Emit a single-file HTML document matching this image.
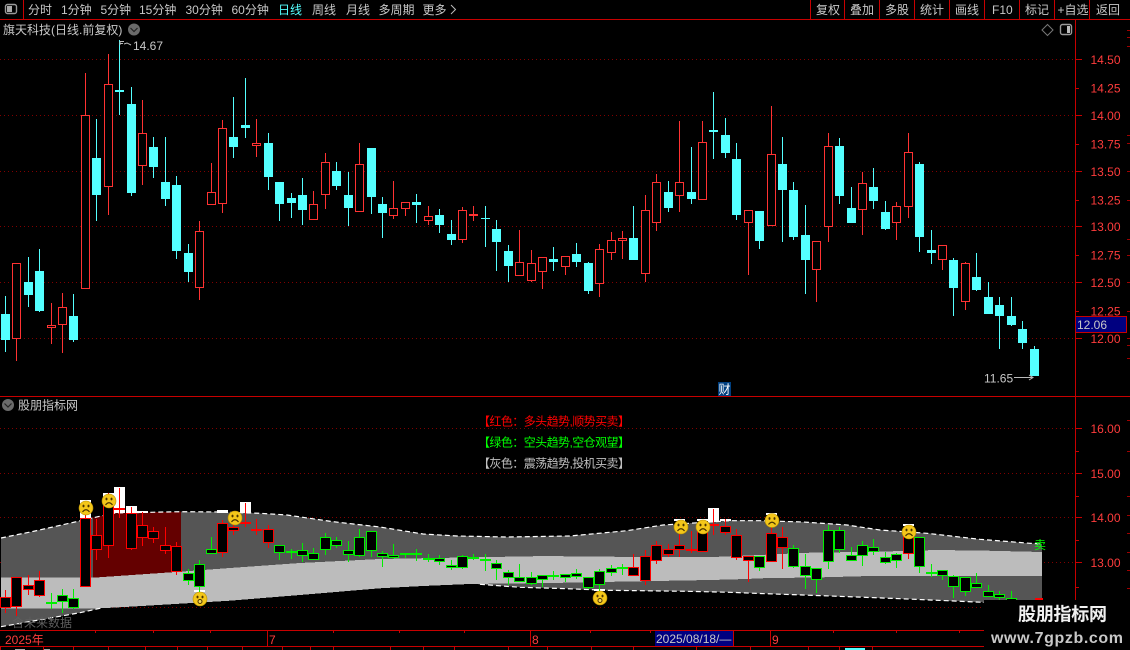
<!DOCTYPE html>
<html>
<head>
<meta charset="utf-8">
<style>
html,body{margin:0;padding:0;background:#000;}
svg{display:block;position:absolute;left:0;top:0;}
text{font-family:"Liberation Sans","WenQuanYi Zen Hei","Noto Sans CJK SC",sans-serif;font-size:12px;fill:#c8c8c8;}
.r{fill:#ff3c3c;}
</style>
</head>
<body>
<svg id="s" width="1130" height="650" viewBox="0 0 1130 650" xmlns="http://www.w3.org/2000/svg">
<g id="grid"></g>
<g id="bands"></g>
<g id="upper" shape-rendering="crispEdges"></g>
<g id="lower" shape-rendering="crispEdges"></g>
<g id="faces"></g>
<g id="axis" shape-rendering="crispEdges"></g>

<!-- top toolbar -->
<rect x="5.5" y="4.5" width="11" height="9" rx="2" fill="#000" stroke="#999" stroke-width="1.4"/>
<rect x="7" y="6" width="5" height="6" fill="#aaa"/>
<text x="28" y="14">分时</text>
<text x="61" y="14">1分钟</text>
<text x="100.5" y="14">5分钟</text>
<text x="139" y="14">15分钟</text>
<text x="185.5" y="14">30分钟</text>
<text x="231.5" y="14">60分钟</text>
<text x="278" y="14" style="fill:#55ffff">日线</text>
<text x="312" y="14">周线</text>
<text x="346" y="14">月线</text>
<text x="378.5" y="14">多周期</text>
<text x="422.5" y="14">更多</text>
<path d="M451 5 L455.5 9.5 L451 14" fill="none" stroke="#bbb"/>
<text x="816" y="14">复权</text>
<text x="850" y="14">叠加</text>
<text x="885" y="14">多股</text>
<text x="920" y="14">统计</text>
<text x="955" y="14">画线</text>
<text x="992" y="14">F10</text>
<text x="1025" y="14">标记</text>
<text x="1057.5" y="14">+自选</text>
<text x="1096" y="14">返回</text>

<!-- title row -->
<text x="3" y="34">旗天科技(日线.前复权)</text>
<circle cx="134" cy="29.5" r="6" fill="#6a6a6a"/>
<path d="M130.5 28 L134 31.5 L137.5 28" fill="none" stroke="#222" stroke-width="1.2"/>
<path d="M1047.5 24.5 L1053 30 L1047.5 35.5 L1042 30 Z" fill="none" stroke="#777"/>
<rect x="1060.5" y="24.5" width="11" height="10" rx="2" fill="#000" stroke="#999" stroke-width="1.4"/>
<rect x="1067" y="26" width="3" height="7" fill="#bbb"/>

<!-- annotations -->
<text x="133" y="50">14.67</text>
<path d="M120 41.5 H124 M120 41.5 V45 M120.5 43.5 H123 M124 44 L127 43 L131 45" fill="none" stroke="#bbb"/>
<text x="984" y="382.5">11.65</text>
<path d="M1014 377.5 H1033 M1029 375 L1033 377.5 L1029 380" fill="none" stroke="#bbb"/>
<rect x="718" y="382" width="13" height="14" fill="#003f7f"/>
<text x="718.5" y="393.5" style="fill:#fff">财</text>

<!-- lower pane titles -->
<circle cx="8" cy="405" r="6" fill="#6a6a6a"/>
<path d="M4.5 403.5 L8 407 L11.5 403.5" fill="none" stroke="#222" stroke-width="1.2"/>
<text x="18" y="409.5">股朋指标网</text>
<text x="478" y="425.5" textLength="152" lengthAdjust="spacing" style="fill:#ff0000">【红色：多头趋势,顺势买卖】</text>
<text x="478" y="446.5" textLength="152" lengthAdjust="spacing" style="fill:#00ff00">【绿色：空头趋势,空仓观望】</text>
<text x="478" y="467.5" textLength="152" lengthAdjust="spacing" style="fill:#c0c0c0">【灰色：震荡趋势,投机买卖】</text>
<text x="12" y="627" style="fill:#5e5e5e">含未来数据</text>
<text x="1034" y="549" style="fill:#00ff00">卖</text>

<!-- axis labels -->
<text class="r" x="1090.5" y="64">14.50</text>
<text class="r" x="1090.5" y="92.5">14.25</text>
<text class="r" x="1090.5" y="120">14.00</text>
<text class="r" x="1090.5" y="148.5">13.75</text>
<text class="r" x="1090.5" y="176">13.50</text>
<text class="r" x="1090.5" y="204.5">13.25</text>
<text class="r" x="1090.5" y="231">13.00</text>
<text class="r" x="1090.5" y="259.5">12.75</text>
<text class="r" x="1090.5" y="287">12.50</text>
<text class="r" x="1090.5" y="315.5">12.25</text>
<text class="r" x="1090.5" y="343">12.00</text>
<rect x="1075.5" y="316.5" width="51" height="16" fill="#000080" stroke="#c80000" shape-rendering="crispEdges"/>
<text x="1077" y="329">12.06</text>
<text class="r" x="1090.5" y="433">16.00</text>
<text class="r" x="1090.5" y="478">15.00</text>
<text class="r" x="1090.5" y="522">14.00</text>
<text class="r" x="1090.5" y="567">13.00</text>

<!-- date axis -->
<text class="r" x="5" y="644">2025年</text>
<text class="r" x="269" y="644">7</text>
<text class="r" x="532" y="644">8</text>
<text class="r" x="772" y="644">9</text>
<rect x="655" y="631" width="78" height="15" fill="#000080" shape-rendering="crispEdges"/>
<text x="656" y="643">2025/08/18/—</text>

<!-- watermark -->
<rect x="984" y="600" width="146" height="50" fill="#000"/>
<text x="1018" y="620.5" textLength="89" lengthAdjust="spacing" style="font-size:18px;font-weight:bold;fill:#f0f0f0">股朋指标网</text>
<text x="991" y="643" textLength="132" lengthAdjust="spacing" style="font-size:16px;font-weight:bold;fill:#c8c8c8">www.7gpzb.com</text>
</svg>

<script>
(function(){
var NS="http://www.w3.org/2000/svg";
function el(p,t,a){var e=document.createElementNS(NS,t);for(var k in a)e.setAttribute(k,a[k]);document.getElementById(p).appendChild(e);return e;}
function rect(p,x,y,w,h,f){return el(p,"rect",{x:x,y:y,width:w,height:h,fill:f});}

/* [colour, wickTop, bodyTop, bodyBottom, wickBottom] c=cyan r=red */
var D=[
["c",296,314,340,352],["r",263,263.3,339.3,361],["c",257,282,295,307],["c",249,271,311,312],["r",303,325.3,327.7,344],
["r",293,307.3,324.7,353],["c",294,316,340,342],["r",73,115.3,288.7,289],["c",119,158,195,221],["r",54,84.3,186.7,215],
["c",40,90,92,115],["c",87,104,193,196],["r",100,133.3,165.7,185],["c",137,147,167,178],["c",137,182,199,206],
["c",176,185,251,259],["c",244,253,272,282],["r",221,231.3,287.7,300],["r",163,192.3,204.7,205],["r",120,128.3,203.7,213],
["c",97,137,147,158],["c",78,125,128,138],["r",119,143.3,145.7,157],["c",133,143,177,190],["c",182,182,204,221],
["c",193,198,203,218],["c",178,195,210,225],["r",191,204.3,219.7,220],["r",153,162.3,194.7,209],["c",162,171,186,190],
["c",172,195,208,226],["r",143,164.3,211.7,212],["c",148,148,197,214],["c",197,204,213,238],["r",181,208.3,215.7,219],
["r",202,202.3,208.7,216],["c",194,202,205,223],["r",206,216.3,220.7,225],["c",209,215,225,233],["c",220,234,240,245],
["r",207,210.3,239.7,243],["r",206,214,216,221],["c",206,218,219,247],["c",220,229,242,271],["c",245,251,266,282],
["r",230,262.3,275.7,276],["r",250,263.3,280.7,282],["r",257,257.3,271.7,289],["c",247,259,262,271],["r",256,256.3,266.7,275],
["c",243,254,262,267],["c",262,263,291,294],["r",244,249.3,283.7,297],["r",232,240.3,252.7,260],["r",231,238.3,240.7,259],
["c",206,238,260,260],["r",195,210.3,273.7,282],["r",174,182.3,222.7,231],["c",181,192,208,212],["r",121,182.3,195.7,212],
["c",147,192,199,204],["r",121,142.3,199.7,200],["c",92,130,132,159],["c",118,135,153,158],["c",143,159,215,220],
["r",210,210.3,222.7,275],["c",211,211,241,249],["r",106,154.3,225.7,226],["c",137,164,190,242],["c",182,190,237,240],
["c",205,235,260,294],["r",241,241.3,269.7,302],["r",133,146.3,226.7,242],["c",138,146,196,204],["c",187,208,223,223],
["r",172,183.3,209.7,235],["c",168,187,201,209],["c",201,212,229,230],["r",202,206.3,222.7,240],["r",133,152.3,206.7,218],
["c",162,164,237,252],["c",230,250,253,264],["r",245,245.3,259.7,270],["c",258,260,288,316],["r",262,263.3,301.7,310],
["c",253,277,290,291],["c",282,297,314,314],["c",297,305,316,349],["c",297,316,325,326],["c",321,329,343,349],
["c",346,349,376,376]
];
/* colour per candle in the lower pane */
var G={};
function green(a,b){for(var i=a;i<=b;i++)G[i]=1;}
green(4,6);green(16,18);green(24,54);green(66,66);green(69,78);green(80,90);

function cx(i){return Math.floor(5.3+11.43*i);}
function ly(y){return 495.5+0.4*(y-59.5);}

/* grids */
[59.5,115.5,171.5,226.5,282.5,338.5,428.5,473.5,517.5,562.5,607.5].forEach(function(y){
  el("grid","line",{x1:0,x2:1075,y1:y,y2:y,stroke:"#800000","stroke-dasharray":"1 3"});
});

/* bands */
var top=[[1,538],[35,531],[75,522],[92,518],[115,513],[180,511.7],[220,512],[260,513.3],[287,515],[333,521.7],[380,527],[423,534],[457,536],[507,537],[570,536],[627,530.7],[663,525],[730,520.7],[760,520.7],[803,522],[847,525],[880,530],[927,533.3],[980,539.3],[1030,543.3],[1042,544]];
var midTop=[[1,577.7],[93,577.7],[180,571.7],[230,568],[300,563],[380,559],[547,556],[593,556.7],[713,557],[760,555],[810,552.7],[877,551.7],[937,550],[987,550.7],[1042,552]];
var midBot=[[1,608.3],[100,608.3],[130,606.7],[230,600.7],[300,595],[380,588.3],[423,586],[470,584],[567,582.7],[617,581.7],[710,580],[747,579],[760,578.3],[823,577.3],[870,576],[1042,576]];
var bot1=[[1,626.7],[80,612.7],[100,608.3]];
var bot2=[[480,584.3],[520,587.3],[567,588.7],[607,590.3],[687,591.3],[730,592.3],[760,593.5],[803,595],[857,597],[900,598.7],[947,600.7],[983,602.3],[1042,606]];
var midPart=midBot.filter(function(p){return p[0]>100&&p[0]<480;});
var bot=bot1.concat(midPart,bot2);
function pts(a){return a.map(function(p){return p[0]+","+p[1];}).join(" ");}
function rev(a){return a.slice().reverse();}
el("bands","polygon",{points:pts(top.concat(rev(bot))),fill:"#555","shape-rendering":"crispEdges"});
var defs=el("bands","clipPath",{id:"rc"});
var cr=document.createElementNS(NS,"rect");cr.setAttribute("x",93);cr.setAttribute("y",480);cr.setAttribute("width",88);cr.setAttribute("height",120);defs.appendChild(cr);
el("bands","polygon",{points:pts(top.concat(rev(midTop))),fill:"#640000","clip-path":"url(#rc)","shape-rendering":"crispEdges"});
el("bands","polygon",{points:pts(midTop.concat(rev(midBot))),fill:"#bcbcbc","shape-rendering":"crispEdges"});
[top,bot1,bot2].forEach(function(a){
  el("bands","polyline",{points:pts(a),fill:"none",stroke:"#fff","stroke-width":1.2,"stroke-dasharray":"5 3"});
});

/* white blocks */
[[7,500,520],[9,493,516],[10,487,513],[11,506,513],[12,511,513],[19,510,513],[21,502,513],[17,590,592],[52,589,591],
 [59,519,521],[61,519,521],[62,508,522],[63,519,521],[67,513,515],[79,524,526]].forEach(function(b){
  rect("lower",cx(b[0])-5,b[1],11,b[2]-b[1],"#fff");
});

/* candles */
D.forEach(function(d,i){
  var c=cx(i);
  var t=Math.round(d[1]),a=Math.round(d[2]),b=Math.round(d[3]),w=Math.round(d[4]);
  if(d[0]=="c"){
    rect("upper",c,t,1,w-t,"#54ffff");
    rect("upper",c-4,a,9,Math.max(b-a,1),"#54ffff");
  }else{
    rect("upper",c,t,1,w-t,"#ff3232");
    el("upper","rect",{x:c-3.5,y:a+.5,width:8,height:Math.max(b-a-1,1),fill:"#000",stroke:"#ff3232"});
  }
  var col=G[i]?"#00f000":"#ff0000";
  var lt=Math.round(ly(d[1])),la=Math.round(ly(d[2])),lb=Math.round(ly(d[3])),lw=Math.round(ly(d[4]));
  rect("lower",c,lt,1,Math.max(lw-lt,1),col);
  if(lb-la<2){
    rect("lower",c-5,la,11,2,col);
  }else{
    el("lower","rect",{x:c-4.5,y:la+.5,width:10,height:lb-la-1,fill:"#000",stroke:col,"stroke-width":1.2});
  }
});
rect("lower",1035,598,8,2,"#ff0000");

/* faces */
function face(x,y,sur){
  el("faces","circle",{cx:x,cy:y,r:7,fill:"#f4c71a",stroke:"#b89000","stroke-width":.6});
  el("faces","ellipse",{cx:x-2.5,cy:y-2,rx:1,ry:1.4,fill:"#4a3400"});
  el("faces","ellipse",{cx:x+2.5,cy:y-2,rx:1,ry:1.4,fill:"#4a3400"});
  if(sur){
    el("faces","circle",{cx:x,cy:y+2.5,r:2,fill:"#f9dc60",stroke:"#4a3400","stroke-width":1});
  }else{
    el("faces","path",{d:"M"+(x-3.5)+" "+(y+4)+" Q"+x+" "+(y-.5)+" "+(x+3.5)+" "+(y+4),fill:"none",stroke:"#4a3400","stroke-width":1.2});
  }
}
[[86,508],[109,501],[235,518],[681,527],[703,527],[772,520.5],[909,532]].forEach(function(p){face(p[0],p[1],0);});
face(200,599,1);face(600,598,1);

/* frame lines */
var R="#c80000";
rect("axis",0,19,1130,1,R);
rect("axis",0,396,1130,1,R);
rect("axis",0,630,984,1,R);
rect("axis",0,646,984,1,R);
rect("axis",1075,20,1,580,R);
[23,810,844,879,914,949,984,1019,1054,1089].forEach(function(x){rect("axis",x,0,1,19,R);});
/* major and minor axis ticks */
[59,115,171,226,282,338,428,473,517,562].forEach(function(y){rect("axis",1076,y,6,1,R);});
[88,144,200,255,311,451,496,540,587].forEach(function(y){rect("axis",1076,y,3,1,R);});
/* far right ticks */
[30,37,46,135,143,171,200,239,255,282,311,338,345,358,420,451,496,515,533,552,570,588].forEach(function(y){rect("axis",1127,y,3,1,"#a00000");});
/* date axis ticks */
[95,153,210,333,399,464,590,650,833,896,959].forEach(function(x){rect("axis",x,630,1,3,R);});
[267,530,770].forEach(function(x){rect("axis",x,630,1,16,R);});
rect("axis",733,631,1,15,R);rect("axis",655,631,1,15,R);
[0,43,73,108,145,177,207,242,282,310,333,390,423,454,508,547,591,633,696,750,808,839,872].forEach(function(x){rect("axis",x,647,1,3,R);});
rect("axis",15,649,10,1,"#aaa");rect("axis",44,649,6,1,"#aaa");
rect("axis",845,648,20,2,"#55ffff");
})();
</script>
</body>
</html>
